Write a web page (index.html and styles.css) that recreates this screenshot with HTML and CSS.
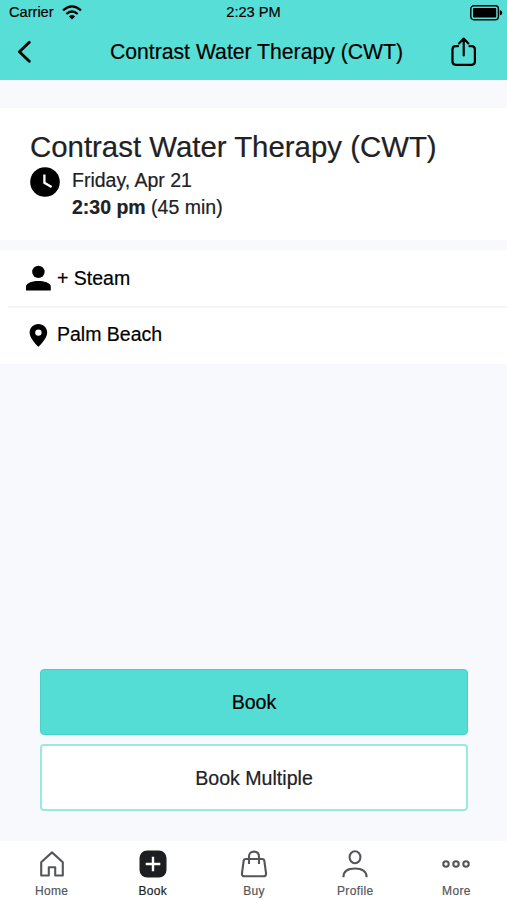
FILE: index.html
```html
<!DOCTYPE html>
<html lang="en">
<head>
<meta charset="utf-8">
<title>Contrast Water Therapy (CWT)</title>
<link rel="stylesheet" href="styles.css">
</head>
<body>
<header class="header">
  <div class="status">
    <div class="carrier"><span>Carrier</span>
      <svg width="20" height="15" viewBox="0 0 20 15" fill="none" stroke="#000" stroke-width="2.3"><path d="M1 5.3Q10-2.5 19 5.3M4.3 9Q10 4.1 15.7 9"/><path d="M6.9 11.4Q10 8.7 13.1 11.4L10 14.5Z" fill="#000" stroke="none"/></svg>
    </div>
    <time>2:23 PM</time>
    <svg class="battery" width="33" height="16" viewBox="0 0 33 16"><rect x=".8" y=".8" width="27.6" height="13.9" rx="3" fill="none" stroke="#000" stroke-width="1.4"/><rect x="3" y="3" width="23.2" height="9.5" rx="1"/><path d="M29.8 5Q32.3 5.5 32.3 7.75T29.8 10.5Z"/></svg>
  </div>
  <div class="bar">
    <svg width="16" height="24" viewBox="0 0 16 24" fill="none" stroke="#000" stroke-width="2.9" stroke-linecap="round" stroke-linejoin="round"><path d="M13.3 2.2 3.4 11.8l9.9 9.4"/></svg>
    <h1>Contrast Water Therapy (CWT)</h1>
    <svg width="26" height="30" viewBox="0 0 26 30" fill="none" stroke="#000" stroke-width="2.2" stroke-linecap="round" stroke-linejoin="round"><path d="M7 9.2H4.7Q1.5 9.2 1.5 12.4V24.6Q1.5 27.8 4.7 27.8H20.7Q23.9 27.8 23.9 24.6V12.4Q23.9 9.2 20.7 9.2H18.5M12.7 18.5V1.8M8 6.4 12.7 1.6 17.4 6.4"/></svg>
  </div>
</header>
<main class="main">
  <section class="summary">
    <h2>Contrast Water Therapy (CWT)</h2>
    <div class="when">
      <svg width="30" height="30" viewBox="0 0 30 30"><circle cx="15" cy="15" r="14.8"/><path d="M14.4 7.5V15.8L21.6 20" fill="none" stroke="#fff" stroke-width="2.3"/></svg>
      <div><p>Friday, Apr 21</p><p><strong>2:30 pm</strong> (45 min)</p></div>
    </div>
  </section>
  <section class="details">
    <div class="row"><svg width="26" height="26" viewBox="0 0 26 26"><circle cx="13.4" cy="6.9" r="6.2"/><path d="M1 25.4V21.8C1 17.8 8.2 16.1 13.4 16.1S25.8 17.8 25.8 21.8V25.4Z"/></svg><span>+ Steam</span></div>
    <div class="row place"><svg width="26" height="26" viewBox="0 0 26 26"><path fill-rule="evenodd" d="M13.4 1C8.4 1 4.6 4.8 4.6 9.7 4.6 15.7 13.4 23.8 13.4 23.8S22.2 15.7 22.2 9.7C22.2 4.8 18.4 1 13.4 1ZM13.4 6.4A3.2 3.2 0 1 1 13.4 12.8 3.2 3.2 0 0 1 13.4 6.4Z"/></svg><span>Palm Beach</span></div>
  </section>
  <div class="actions">
    <button class="btn primary">Book</button>
    <button class="btn">Book Multiple</button>
  </div>
</main>
<nav class="tabs">
  <a><svg viewBox="0 0 28 28"><path d="M3.2 12.2 14 2.4 24.8 12.2V25.5H17.2V17.3H10.8V25.5H3.2Z"/></svg><span>Home</span></a>
  <a class="active"><svg viewBox="0 0 28 28"><rect x=".5" y=".5" width="27" height="27" rx="7.5" fill="#1d1e22" stroke="none"/><path d="M14 6.7V21.3M6.7 14H21.3" stroke="#fff" stroke-width="2.4"/></svg><span>Book</span></a>
  <a><svg viewBox="0 0 28 28"><path d="M5.6 9H22.4Q24 9 24.3 10.5L26 23Q26.5 26.3 23.3 26.3H4.7Q1.5 26.3 2 23L3.7 10.5Q4 9 5.6 9ZM9 14V6.7Q9 1.6 14 1.6T19 6.7V14"/></svg><span>Buy</span></a>
  <a><svg viewBox="0 0 28 28"><ellipse cx="14" cy="7.2" rx="5.4" ry="6"/><path d="M2.4 27.2C2.4 21.4 6.8 18.5 14 18.5S25.6 21.4 25.6 27.2"/></svg><span>Profile</span></a>
  <a><svg viewBox="0 0 28 28"><circle cx="4" cy="14" r="2.7"/><circle cx="14" cy="14" r="2.7"/><circle cx="24" cy="14" r="2.7"/></svg><span>More</span></a>
</nav>
</body>
</html>
```
FILE: styles.css
```css
* { box-sizing: border-box; margin: 0; padding: 0; }
svg { display: block; flex: none; }
body {
  height: 900px;
  display: flex;
  flex-direction: column;
  overflow: hidden;
  background: #f7f9fc;
  color: #000;
  font-family: "Liberation Sans", Arial, sans-serif;
  -webkit-text-stroke: .2px;
}
.header { height: 80px; background: #57dfd7; }
.status {
  height: 25px;
  padding: 0 4px 0 9px;
  display: grid;
  grid-template-columns: 1fr auto 1fr;
  align-items: center;
  font-size: 14.6px;
  line-height: 25px;
}
.status time { margin-left: -5px; }
.carrier { display: flex; align-items: center; gap: 8px; }
.battery { justify-self: end; }
.bar {
  height: 54px;
  padding: 0 30px 0 16px;
  display: flex;
  align-items: center;
  justify-content: space-between;
}
.bar h1 { font-size: 21.2px; font-weight: 400; white-space: nowrap; margin-left: 30px; }
.main { flex: 1; display: flex; flex-direction: column; }
.summary {
  height: 132px;
  margin-top: 28px;
  padding: 21px 30px 0;
  background: #fff;
  color: #202124;
}
.summary h2 { font-size: 29.4px; font-weight: 400; line-height: 36px; white-space: nowrap; }
.when { display: flex; gap: 12px; margin-top: 2px; font-size: 19.5px; line-height: 27px; }
.details { margin-top: 10px; height: 114px; background: #fff; }
.row {
  height: 56px;
  padding-left: 25px;
  display: flex;
  align-items: center;
  gap: 6px;
  font-size: 19.5px;
}
.place { height: 58px; margin-left: 8px; padding-left: 17px; border-top: 2px solid #f3f4f5; }
.place span { margin-top: -3px; }
.actions { margin: auto 39px 30px 40px; display: flex; flex-direction: column; gap: 9px; }
.btn {
  height: 67px;
  padding-top: 1px;
  border: 2px solid #99e9e1;
  border-radius: 4px;
  background: #fff;
  color: #202124;
  font: 19.6px "Liberation Sans", Arial, sans-serif;
  -webkit-text-stroke: .2px;
}
.primary { height: 66px; border: 1px solid #46d2ca; background: #54ddd5; color: #000; }
.tabs { height: 59px; padding-left: 1px; background: #fff; display: flex; }
.tabs a {
  flex: 1;
  padding-top: 9px;
  display: flex;
  flex-direction: column;
  align-items: center;
  gap: 6px;
  color: #55565a;
  font-size: 12px;
  line-height: 15px;
  letter-spacing: .35px;
}
.tabs svg { width: 28px; height: 28px; fill: none; stroke: #55565a; stroke-width: 2.1; stroke-linejoin: round; }
.tabs .active { color: #1d1e22; }
```
